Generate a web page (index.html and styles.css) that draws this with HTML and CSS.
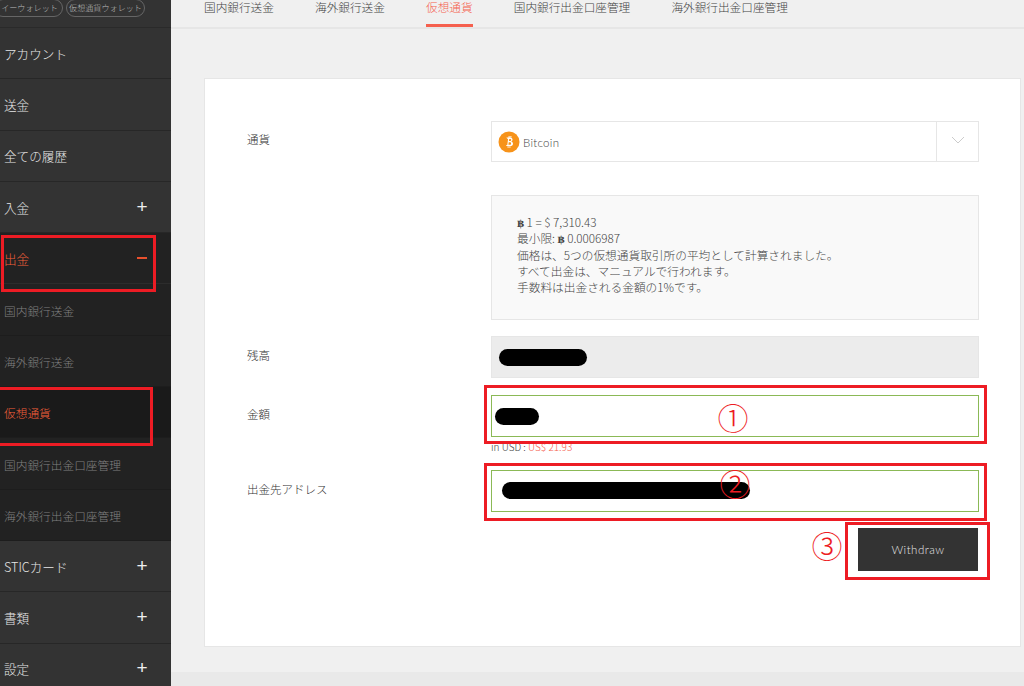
FILE: index.html
```html
<!DOCTYPE html>
<html lang="ja">
<head>
<meta charset="utf-8">
<title>出金</title>
<link rel="stylesheet" href="styles.css">
</head>
<body>
<div class="page">
  <aside class="sidebar">
    <div class="wallets">
      <span class="pill pill-first">イーウォレット</span>
      <span class="pill">仮想通貨ウォレット</span>
    </div>
    <nav class="menu">
      <a class="item">アカウント</a>
      <a class="item">送金</a>
      <a class="item">全ての履歴</a>
      <a class="item">入金<span class="sign">+</span></a>
      <a class="item item-open">出金<span class="sign-minus"></span></a>
      <a class="item sub">国内銀行送金</a>
      <a class="item sub">海外銀行送金</a>
      <a class="item sub sub-active">仮想通貨</a>
      <a class="item sub">国内銀行出金口座管理</a>
      <a class="item sub">海外銀行出金口座管理</a>
      <a class="item">STICカード<span class="sign">+</span></a>
      <a class="item">書類<span class="sign">+</span></a>
      <a class="item">設定<span class="sign">+</span></a>
    </nav>
  </aside>
  <main class="main">
    <div class="tabs">
      <a class="tab">国内銀行送金</a>
      <a class="tab">海外銀行送金</a>
      <a class="tab tab-active">仮想通貨</a>
      <a class="tab">国内銀行出金口座管理</a>
      <a class="tab">海外銀行出金口座管理</a>
    </div>
    <div class="content">
      <section class="card">
        <div class="row row-select">
          <label class="label">通貨</label>
          <div class="select">
            <span class="coin">
              <svg viewBox="0 0 22 22" width="22" height="22"><circle cx="11" cy="11" r="10.5" fill="#f7931a"/><path d="M8.4 6.4h3.5c1.6 0 2.6.8 2.6 2.1 0 1-.5 1.7-1.4 2 1.2.2 1.9 1 1.9 2.2 0 1.5-1.1 2.4-2.9 2.4H8.2l.2-1.2h.9l.8-6.1h-.9zM11.2 8l-.3 2h1.1c.8 0 1.2-.4 1.2-1 0-.6-.4-1-1.1-1zm-.5 3.3-.3 2.5h1.3c.9 0 1.4-.5 1.4-1.3 0-.7-.5-1.2-1.3-1.2zM10.6 5h1v1.4h-1zM12.4 5h1v1.4h-1zM9.6 15.2h1v1.6h-1zM11.4 15.2h1v1.6h-1z" fill="#fff"/></svg>
            </span>
            <span class="select-text">Bitcoin</span>
            <span class="select-arrow">
              <svg viewBox="0 0 14 8" width="14" height="8"><path d="M1 1l6 6 6-6" fill="none" stroke="#ccc" stroke-width="1"/></svg>
            </span>
          </div>
        </div>
        <div class="row row-info">
          <span class="label"></span>
          <div class="info">
            <p><b class="btc">฿</b> 1 = $ 7,310.43</p>
            <p>最小限: <b class="btc">฿</b> 0.0006987</p>
            <p>価格は、5つの仮想通貨取引所の平均として計算されました。</p>
            <p>すべて出金は、マニュアルで行われます。</p>
            <p>手数料は出金される金額の1%です。</p>
          </div>
        </div>
        <div class="row row-balance">
          <label class="label">残高</label>
          <div class="field field-disabled"><span class="mask mask-balance"></span></div>
        </div>
        <div class="row row-amount">
          <label class="label">金額</label>
          <div>
            <div class="field field-valid"><span class="mask mask-amount"></span></div>
            <p class="usd">in USD : <span class="usd-value">US$ 21.93</span></p>
          </div>
        </div>
        <div class="row row-address">
          <label class="label">出金先アドレス</label>
          <div class="field field-valid"><span class="mask mask-address"></span></div>
        </div>
        <div class="actions"><button class="button" type="button">Withdraw</button></div>
      </section>
    </div>
    <div class="footer-strip"></div>
  </main>
  <div class="mark mark-out"></div>
  <div class="mark mark-crypto"></div>
  <div class="mark mark-amount"></div>
  <div class="mark mark-address"></div>
  <div class="mark mark-button"></div>
  <span class="num num-1">①</span>
  <span class="num num-2">②</span>
  <span class="num num-3">③</span>
</div>
</body>
</html>
```
FILE: styles.css
```css
* { box-sizing: border-box; }
html, body { margin: 0; padding: 0; }
body {
  font-family: "Noto Sans CJK JP", "Lato", sans-serif;
  font-weight: 300;
  color: #444;
}
.page {
  position: relative;
  display: flex;
  width: 1024px;
  height: 686px;
  overflow: hidden;
  background: #f0f0f0;
}
.sidebar {
  flex: 0 0 171px;
  background: #333;
  overflow: hidden;
}
.wallets {
  display: flex;
  align-items: flex-end;
  gap: 3px;
  height: 28px;
  padding-bottom: 10px;
  border-bottom: 1px solid #2a2a2a;
  margin-left: -6px;
  overflow: hidden;
}
.pill {
  flex: none;
  display: flex;
  align-items: center;
  justify-content: center;
  width: 79px;
  height: 18px;
  border: 1px solid #666;
  border-radius: 10px;
  font-size: 8.1px;
  line-height: 1;
  color: #bbb;
  white-space: nowrap;
}
.pill-first { width: 69px; padding-left: 2px; }
.menu { display: flex; flex-direction: column; }
.item {
  display: flex;
  align-items: center;
  justify-content: space-between;
  flex: none;
  height: 51.3px;
  padding: 0 23px 0 4px;
  border-bottom: 1px solid #272727;
  font-size: 12.6px;
  font-weight: 300;
  color: #e6e6e6;
  white-space: nowrap;
}
.sign {
  width: 12px;
  text-align: center;
  font-family: "Liberation Sans", sans-serif;
  font-size: 19px;
  font-weight: 400;
  line-height: 1;
  color: #eee;
  margin-top: -2px;
}
.sign-minus {
  width: 10px;
  height: 2px;
  margin-right: 1px;
  margin-top: -2px;
  background: #e8502d;
}
.item-open {
  background: #222;
  color: #f4603a;
  padding-top: 1px;
  border-bottom-color: #2c2c2c;
}
.sub {
  background: #222;
  color: #808080;
  font-size: 11.7px;
  padding-top: 1px;
  border-bottom-color: #1d1d1d;
}
.sub-active {
  background: #1a1a1a;
  color: #f4603a;
}
.main {
  flex: 1;
  display: flex;
  flex-direction: column;
  min-width: 0;
}
.tabs {
  display: flex;
  flex: none;
  gap: 41.2px;
  height: 29px;
  padding-left: 33px;
  border-bottom: 2px solid #e6e6e6;
}
.tab {
  height: 27px;
  font-size: 11.65px;
  line-height: 14px;
  font-weight: 300;
  color: #444;
  white-space: nowrap;
}
.tab-active {
  color: #f5604e;
  border-bottom: 3px solid #f5604e;
}
.content {
  flex: none;
  height: 643px;
  padding: 49px 3px 25px 33px;
}
.card {
  height: 569px;
  padding: 42px 42px 0;
  background: #fff;
  border: 1px solid #e6e6e6;
}
.row {
  display: grid;
  grid-template-columns: 244px 488px;
}
.label {
  padding-top: 10px;
  font-size: 11.5px;
  font-weight: 300;
  color: #333;
}
.select {
  display: flex;
  align-items: center;
  height: 41px;
  padding-left: 6px;
  border: 1px solid #e6e6e6;
}
.coin { display: flex; margin-right: 3px; }
.select-text {
  flex: 1;
  padding-top: 1px;
  font-family: "Lato", sans-serif;
  font-size: 11.5px;
  font-weight: 300;
  letter-spacing: .3px;
  color: #444;
}
.select-arrow {
  display: flex;
  align-items: center;
  justify-content: center;
  align-self: stretch;
  width: 42px;
  padding-bottom: 3px;
  border-left: 1px solid #e6e6e6;
}
.row-info { margin-top: 33px; }
.info {
  height: 125px;
  padding: 18px 25px;
  background: #f9f9f9;
  border: 1px solid #e6e6e6;
  font-size: 11.7px;
  font-weight: 300;
  line-height: 16.25px;
  color: #444;
}
.info p { margin: 0; height: 16.25px; }
.btc {
  font-family: "DejaVu Serif", serif;
  font-weight: 700;
  font-size: 10px;
  line-height: 0;
}
.row-balance { margin-top: 16px; }
.row-amount { margin-top: 17px; }
.row-address { margin-top: 15px; }
.row-balance .label, .row-amount .label, .row-address .label { padding-top: 11px; }
.field {
  display: flex;
  align-items: center;
  height: 42px;
  border: 1px solid #e6e6e6;
}
.field-disabled { background: #ececec; padding-left: 7px; }
.field-valid { border-color: #8bb956; background: #fff; }
.mask {
  display: block;
  height: 17px;
  background: #000;
  border-radius: 8.5px;
}
.mask-balance { width: 88px; }
.mask-amount { width: 44px; margin-left: 3px; }
.mask-address { width: 248px; margin-left: 10px; margin-bottom: 1px; }
.usd {
  margin: 2px 0 0;
  height: 16px;
  font-size: 10px;
  line-height: 16px;
  font-weight: 300;
  color: #444;
}
.usd-value { color: #f5604e; }
.actions {
  display: flex;
  justify-content: flex-end;
  margin-top: 16px;
}
.button {
  width: 120px;
  height: 43px;
  border: 0;
  background: #333;
  color: #e6e6e6;
  font-family: "Lato", sans-serif;
  font-size: 11.5px;
  font-weight: 300;
  letter-spacing: .5px;
}
.footer-strip {
  flex: 1;
  background: #e9e9e9;
}
.mark {
  position: absolute;
  border: 3px solid #ed1c24;
}
.mark-out { left: 1px; top: 235px; width: 155px; height: 57px; }
.mark-crypto { left: -3px; top: 387px; width: 156px; height: 59px; }
.mark-amount { left: 484px; top: 385px; width: 503px; height: 59px; }
.mark-address { left: 484px; top: 463px; width: 503px; height: 58px; }
.mark-button { left: 845px; top: 522px; width: 145px; height: 58px; }
.num {
  position: absolute;
  width: 32px;
  height: 32px;
  font-size: 31px;
  line-height: 32px;
  text-align: center;
  font-weight: 300;
  color: #ed1c24;
}
.num-1 { left: 717px; top: 401px; }
.num-2 { left: 719px; top: 467px; }
.num-3 { left: 811px; top: 529px; }
```
